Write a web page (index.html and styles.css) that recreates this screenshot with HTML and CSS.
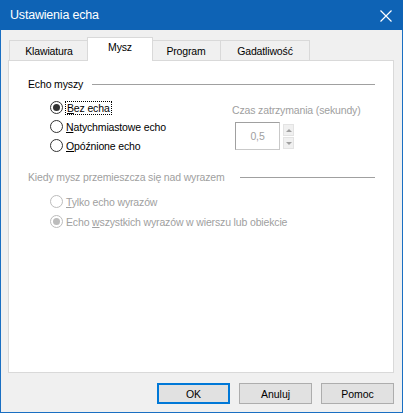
FILE: index.html
```html
<html>
	<head>
		<title>Ustawienia echa</title>
		<link rel="stylesheet" href="styles.css">
	</head>
	<body>
		<div class="window">
			<div class="titlebar">
				<span class="title">Ustawienia echa</span>
				<svg class="close" width="12" height="12" viewBox="0 0 12 12">
					<path d="M0.5 0.5 L11.5 11.5 M11.5 0.5 L0.5 11.5" stroke="#fff" stroke-width="1.2" fill="none" />
				</svg>
			</div>
			<div class="body">
				<div class="tabs">
					<div class="tab tab-klaw">Klawiatura</div>
					<div class="tab tab-mysz selected">Mysz</div>
					<div class="tab tab-prog">Program</div>
					<div class="tab tab-gad">Gadatliwość</div>
				</div>
				<div class="panel">
					<div class="group-head head-echo">
						<span>Echo myszy</span>
						<span class="rule"></span>
					</div>
					<div class="echo-row">
						<div class="radios">
							<div class="radio"><span class="dot checked"></span><span class="focus"><u>B</u>ez echa</span></div>
							<div class="radio"><span class="dot"></span><span><u>N</u>atychmiastowe echo</span></div>
							<div class="radio"><span class="dot"></span><span><u>O</u>późnione echo</span></div>
						</div>
						<div class="delay">
							<div class="delay-label">Czas zatrzymania (sekundy)</div>
							<div class="spin">
								<div class="spin-box">0,5</div>
								<div class="spin-btns">
									<div class="spin-btn"><span class="arrow up"></span></div>
									<div class="spin-btn"><span class="arrow down"></span></div>
								</div>
							</div>
						</div>
					</div>
					<div class="group-head head-word disabled">
						<span>Kiedy mysz przemieszcza się nad wyrazem</span>
						<span class="rule"></span>
					</div>
					<div class="radios word-radios disabled">
						<div class="radio"><span class="dot"></span><span><u>T</u>ylko echo wyrazów</span></div>
						<div class="radio"><span class="dot checked"></span><span>Echo <u>w</u>szystkich wyrazów w wierszu lub obiekcie</span></div>
					</div>
				</div>
				<div class="buttons">
					<button class="btn default">OK</button>
					<button class="btn">Anuluj</button>
					<button class="btn">Pomoc</button>
				</div>
			</div>
		</div>
	</body>
</html>
```

FILE: styles.css
```css
body {
	margin: 0;
	font: 10.5px "Liberation Sans", Arial, sans-serif;
	letter-spacing: -0.15px;
	color: #000;
}
.window {
	width: 403px;
	height: 413px;
	box-sizing: border-box;
	border: 1px solid #1a6fc2;
	border-top: none;
	background: #f0f0f0;
	display: flex;
	flex-direction: column;
}
.titlebar {
	height: 30px;
	margin: 0 -1px;
	background: #0e63b5;
	color: #fff;
	display: flex;
	align-items: center;
	justify-content: space-between;
	padding: 0 11px 0 10px;
	font-size: 12.5px;
	letter-spacing: -0.2px;
}
.close {
	display: block;
	margin-top: 1px;
}
.body {
	padding: 8px 8px 0 7px;
	flex: 1;
	display: flex;
	flex-direction: column;
}
.tabs {
	display: flex;
	align-items: flex-end;
	height: 22px;
	padding-left: 1px;
}
.tab {
	height: 20px;
	box-sizing: border-box;
	border: 1px solid #d9d9d9;
	border-bottom: none;
	background: #f0f0f0;
	text-align: center;
	line-height: 20px;
	margin-left: -1px;
}
.tab-klaw {
	width: 80px;
	margin-left: 0;
}
.tab-prog {
	width: 70px;
}
.tab-gad {
	width: 90px;
}
.tab.selected {
	height: 24px;
	margin-bottom: -1px;
	background: #fff;
	line-height: 19px;
	z-index: 1;
	width: 66px;
	margin-left: -2px;
	margin-right: -1px;
}
.panel {
	height: 313px;
	box-sizing: border-box;
	background: #fff;
	border: 1px solid #d9d9d9;
	padding: 16px 18px 0 19px;
}
.group-head {
	display: flex;
	align-items: center;
	height: 14px;
}
.rule {
	flex: 1;
	border-top: 1px solid #a0a0a0;
	margin-top: 1px;
}
.head-echo .rule {
	margin-left: 9px;
}
.head-word .rule {
	margin-left: 15px;
}
.disabled {
	color: #a0a0a0;
}
.echo-row {
	display: flex;
	margin-top: 7px;
}
.radios {
	padding-left: 22px;
	width: 165px;
}
.radio {
	display: flex;
	align-items: center;
	height: 19px;
}
.dot {
	width: 13px;
	height: 13px;
	box-sizing: border-box;
	border: 1px solid #333;
	border-radius: 50%;
	background: #fff;
	margin-right: 3px;
	display: flex;
	align-items: center;
	justify-content: center;
}
.dot.checked::after {
	content: "";
	width: 7px;
	height: 7px;
	border-radius: 50%;
	background: #333;
}
.disabled .dot {
	border-color: #bcbcbc;
}
.disabled .dot.checked::after {
	background: #bcbcbc;
}
.focus {
	outline: 1px dotted #000;
	outline-offset: 0;
	padding: 0 1px;
}
.delay {
	padding-left: 17px;
	color: #a0a0a0;
	padding-top: 6px;
}
.delay-label {
	line-height: 13px;
}
.spin {
	display: flex;
	margin-top: 5px;
	margin-left: 3px;
}
.spin-box {
	width: 45px;
	height: 28px;
	box-sizing: border-box;
	border: 1px solid #c9c9c9;
	border-top-color: #a0a0a0;
	border-left-color: #a0a0a0;
	text-align: center;
	line-height: 26px;
}
.spin-btns {
	margin-left: 3px;
	display: flex;
	flex-direction: column;
	gap: 1px;
	padding-top: 2px;
}
.spin-btn {
	width: 11px;
	height: 12px;
	background: #f0f0f0;
	border: 1px solid #e3e3e3;
	box-sizing: border-box;
	display: flex;
	align-items: center;
	justify-content: center;
}
.arrow {
	width: 0;
	height: 0;
	border-left: 3px solid transparent;
	border-right: 3px solid transparent;
}
.arrow.up {
	border-bottom: 3px solid #a0a0a0;
}
.arrow.down {
	border-top: 3px solid #a0a0a0;
}
.head-word {
	margin-top: 15px;
}
.word-radios {
	margin-top: 8px;
	width: auto;
}
.word-radios .radio + .radio {
	margin-top: 1px;
}
.buttons {
	display: flex;
	justify-content: flex-end;
	gap: 9px;
	padding-top: 10px;
}
.btn {
	width: 73px;
	height: 21px;
	box-sizing: border-box;
	border: 1px solid #adadad;
	background: #e1e1e1;
	font: 10.5px "Liberation Sans", Arial, sans-serif;
	color: #000;
	padding: 0;
}
.btn.default {
	border: 2px solid #0078d7;
}
```
